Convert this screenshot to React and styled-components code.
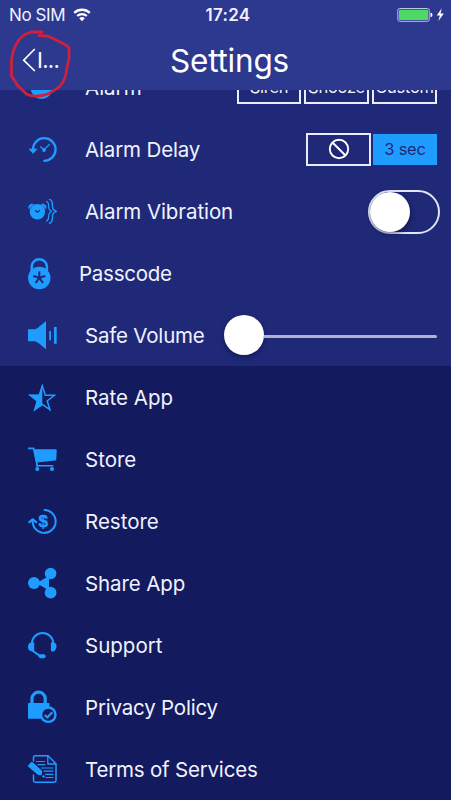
import React from "react";
import styled, { createGlobalStyle } from "styled-components";

const BLUE = "#1f9dff";
const PANEL = "#1f2978";
const DARK = "#141a5e";

const GlobalStyle = createGlobalStyle`
  * { box-sizing: border-box; }
  body { margin: 0; background: ${DARK}; }
`;

const Screen = styled.div`
  position: relative;
  display: flex;
  flex-direction: column;
  width: 451px;
  height: 800px;
  overflow: hidden;
  background: ${DARK};
  color: #f0f2ff;
  font-family: Inter, "Liberation Sans", sans-serif;
`;

const Header = styled.header`
  flex: none;
  height: 90px;
  background: #2d388f;
`;

const StatusBar = styled.div`
  display: grid;
  grid-template-columns: 1fr auto 1fr;
  align-items: center;
  height: 30px;
  padding: 0 6px 0 9px;
  font-size: 17px;
`;

const Carrier = styled.div`
  display: flex;
  align-items: center;
  gap: 8px;
  letter-spacing: -0.4px;
`;

const Clock = styled.div`
  padding-left: 2px;
  font-weight: 600;
  font-size: 17px;
  letter-spacing: 0.3px;
`;

const Power = styled.div`
  display: flex;
  justify-content: flex-end;
`;

const NavBar = styled.div`
  display: grid;
  grid-template-columns: 80px 1fr 72px;
  align-items: center;
  height: 60px;
`;

const BackButton = styled.button`
  display: flex;
  align-items: center;
  gap: 1px;
  height: 60px;
  padding: 0 0 1px 22px;
  border: 0;
  background: none;
  color: #fff;
  font: 400 22px Inter, sans-serif;
  letter-spacing: -0.7px;
`;

const Title = styled.h1`
  margin: 0;
  padding-top: 1px;
  color: #fff;
  font-size: 31.5px;
  font-weight: 400;
  line-height: 60px;
  text-align: center;
  letter-spacing: -0.2px;
`;

const Content = styled.main`
  flex: 1;
  overflow: hidden;
`;

const List = styled.div`
  margin-top: -34px;
`;

const Section = styled.section`
  background: ${(p) => (p.$dark ? DARK : PANEL)};
`;

const Row = styled.div`
  display: flex;
  align-items: center;
  height: 62px;
  padding: 2px 14px 0 24px;
`;

const Icon = styled.svg`
  flex: none;
  width: 36px;
  height: 36px;
  margin-right: ${(p) => (p.$tight ? 19 : 25)}px;
  fill: ${BLUE};
  stroke: none;
  overflow: visible;
`;

const Label = styled.span`
  flex: 1;
  white-space: nowrap;
  font-size: 20.5px;
  line-height: 28px;
  letter-spacing: ${(p) => p.$spacing || 0}px;
`;

const Segments = styled.div`
  display: flex;
  align-items: center;
  gap: ${(p) => p.$gap || 3}px;
  margin-top: -2px;
`;

const Segment = styled.div`
  display: flex;
  align-items: center;
  justify-content: center;
  width: ${(p) => p.$width || 65}px;
  height: ${(p) => (p.$active ? 31 : 33)}px;
  border: ${(p) => (p.$active ? "0" : "2px solid #e9ebff")};
  background: ${(p) => (p.$active ? BLUE : "transparent")};
  color: ${(p) => (p.$active ? PANEL : "#f0f2ff")};
  font-size: 16.5px;
  letter-spacing: -0.25px;
`;

const Toggle = styled.div`
  display: flex;
  align-items: center;
  width: 72px;
  height: 44px;
  margin-right: -3px;
  border: 2px solid #e3e5f3;
  border-radius: 22px;
`;

const ToggleKnob = styled.div`
  width: 40px;
  height: 40px;
  margin-top: -1px;
  border-radius: 50%;
  background: #fff;
  box-shadow: 1px 2px 5px rgba(5, 10, 50, 0.5);
`;

const Slider = styled.div`
  display: flex;
  align-items: center;
  width: 213px;
`;

const Thumb = styled.div`
  flex: none;
  width: 40px;
  height: 40px;
  margin-top: -2px;
  border-radius: 50%;
  background: #fff;
  box-shadow: 0 2px 5px rgba(5, 10, 50, 0.5);
`;

const Track = styled.div`
  flex: 1;
  height: 3px;
  margin-top: 1px;
  border-radius: 0 2px 2px 0;
  background: #afb2cb;
`;

const Scribble = styled.svg`
  position: absolute;
  left: 0;
  top: 0;
  pointer-events: none;
`;

const line = (w) => ({ fill: "none", stroke: BLUE, strokeWidth: w, strokeLinecap: "round", strokeLinejoin: "round" });

const icons = {
  alarm: <circle cx="17.5" cy="18" r="10.8" />,
  delay: (
    <>
      <path d="M9 18a11.3 11.3 0 1 1 11.3 10.8" {...line(2.3)} />
      <path d="M4.4 16.8h9.4l-4.7 5z" />
      <path d="M16.5 14.8 20 17.8l5.3-5.3" {...line(1.2)} />
      <circle cx="20" cy="18" r="1.9" />
    </>
  ),
  vibration: (
    <>
      <circle cx="13.4" cy="17.8" r="7.7" />
      <path d="M4.8 14.3a3.4 3.4 0 0 1 4.4-4.1zM22 14.3a3.4 3.4 0 0 0-4.4-4.1z" {...line(0.8)} fill={BLUE} />
      <path d="m11.2 16.2 2.2 2 2.5-2" fill="none" stroke={PANEL} strokeWidth="1.3" />
      <path d="M22.6 7.4c3 1 1.5 5.5 2.4 7.5.4 1 1.6 1.8 2.4 2.4-.8.6-2 1.6-2.4 2.6-.9 2 .6 6.2-2.4 7.2" {...line(1.2)} />
      <path d="M25.5 5.4c4.3 1 2.4 6.5 3.3 9 .5 1.4 2 2.3 3.6 2.9-1.6.6-3.1 1.500-3.6 2.9-.9 2.500 1 8-3.3 9" {...line(1.4)} />
    </>
  ),
  passcode: (
    <>
      <circle cx="15.3" cy="22" r="11.2" />
      <path d="M7.7 15v-4.5a7.6 7.2 0 0 1 15.2 0V15" {...line(2.5)} />
      <path d="M15.3 21.8v-6.3M15.3 21.8l6-1.9M15.3 21.8l3.7 5.2M15.3 21.8l-3.7 5.2M15.3 21.8l-6-1.9" fill="none" stroke={PANEL} strokeWidth="2.1" />
    </>
  ),
  volume: (
    <path d="M4 11.3h7C14.5 10 18 6 22 3v28.2C18 28 14.5 24.6 11 23.3H4zM25.2 13H27v9.3h-1.800zM30 9h2.700v16.700H30z" />
  ),
  star: (
    <>
      <path d="M18.3 6l3 9.300H30.500l-7.300 5.700 2.700 8.600-7.600-5.200-7.600 5.200 2.700-8.600-7.300-5.700h9.200z" {...line(1.500)} strokeLinejoin="miter" />
      <path d="M18.300 4v21l-8.500 6.200 3.100-10L4.500 14.700H15z" />
    </>
  ),
  cart: (
    <>
      <path d="M4.800 6.300h4.800l3.700 17.500" {...line(1.700)} />
      <path d="M10 7.200h21.700q1 0 1 1l-.4 9q0 1-1 1.200L12.500 20.600z" />
      <path d="M12.500 23.800h16.200" {...line(1.600)} />
      <circle cx="13.300" cy="27" r="2" />
      <circle cx="28" cy="27" r="2" />
    </>
  ),
  restore: (
    <>
      <path d="M8.700 16.500a11.500 11.500 0 1 0 11.800-10.600" {...line(2)} />
      <path d="m5.300 18.200 3.400-2.900 3.500 2.900" {...line(2.200)} />
      <text x="19.300" y="22.700" fontSize="17" fontWeight="600" textAnchor="middle" fontFamily="Liberation Sans" stroke={BLUE} strokeWidth=".5">$</text>
    </>
  ),
  share: (
    <>
      <circle cx="10" cy="17" r="6" />
      <circle cx="26.600" cy="7.500" r="5.800" />
      <circle cx="26.600" cy="26.700" r="5.900" />
      <path d="M14 16.300 24 10.500l1 1v11.500l-1 1L14 18z" />
    </>
  ),
  support: (
    <>
      <path d="M8 16.500v-1.200a10.600 10.200 0 0 1 21.200 0v1.200" {...line(2)} />
      <path d="M7.500 14.500h2.700v8.700H7.500c-4.700 0-4.700-8.700 0-8.700zM29.600 14.500h-2.700v7.300c0 2.300 3 2.300 3.900.8 2.600-2.200 2.400-8.100-1.200-8.100z" />
      <path d="m8.800 23 6.500 4.400" {...line(1.900)} />
      <rect x="14.600" y="26.300" width="7" height="4" rx="2" />
    </>
  ),
  privacy: (
    <>
      <path d="M8 14V8.500a6.600 6.300 0 0 1 13.200 0V14" {...line(3.200)} />
      <rect x="4" y="13" width="21.500" height="15.700" rx=".5" />
      <circle cx="24.300" cy="24.700" r="8.400" />
      <circle cx="24.300" cy="24.700" r="6" fill={DARK} />
      <path d="m20.800 25 2.500 2.500 5-5.200" {...line(2.200)} strokeLinecap="butt" />
    </>
  ),
  terms: (
    <>
      <path d="M9.500 9V5.500q0-1.700 1.700-1.700H24l8 8v16.700q0 1.700-1.700 1.700H11.200q-1.700 0-1.700-1.700V23" {...line(1.500)} />
      <path d="M23.800 4v8h8" {...line(1.300)} />
      <path d="M12.500 9.500h8M14 12.700h7M17.500 16h11.500M20 19.200h9M21.500 22.300H29M22 25.500h7" {...line(1.200)} />
      <path d="M4.300 13.200 7 10.300q.8-.8 1.700 0l9.500 8.700-.6 4.300-3.400-.3-9.900-8.300q-.8-.7 0-1.500z" />
      <circle cx="19.500" cy="24.400" r="1.200" />
    </>
  ),
};

function Item({ icon, label, spacing, tight, children }) {
  return (
    <Row>
      <Icon viewBox="0 0 36 36" $tight={tight}>{icons[icon]}</Icon>
      <Label $spacing={spacing}>{label}</Label>
      {children}
    </Row>
  );
}

const links = [
  ["star", "Rate App", 0],
  ["cart", "Store", 0],
  ["restore", "Restore", 0],
  ["share", "Share App", -0.1],
  ["support", "Support", 0],
  ["privacy", "Privacy Policy", -0.2],
  ["terms", "Terms of Services", -0.2],
];

export default function App() {
  return (
    <Screen>
      <GlobalStyle />
      <Header>
        <StatusBar>
          <Carrier>
            No SIM
            <svg width="18" height="14" viewBox="0 0 18 14" fill="none" stroke="#fff" strokeWidth="2.300">
              <path d="M1.200 4.900a11.200 11.200 0 0 1 15.600 0M4.200 8a7 7 0 0 1 9.600 0" />
              <path d="M9 13.200 6.200 10.300a4 4 0 0 1 5.600 0z" fill="#fff" stroke="none" />
            </svg>
          </Carrier>
          <Clock>17:24</Clock>
          <Power>
            <svg width="48" height="16" viewBox="0 0 48 16">
              <rect x=".8" y="1.500" width="31.400" height="12.800" rx="1.800" fill="none" stroke="#b9c6e6" />
              <rect x="2" y="2.700" width="29" height="10.400" rx=".6" fill="#4cd964" />
              <path d="M33.500 5.500q2 .5 2 2.400t-2 2.400z" fill="#fff" />
              <path d="M44.800 1.300 39.700 8.500h3.100l-1.300 5.500 5.300-7.600h-3.300z" fill="#fff" />
            </svg>
          </Power>
        </StatusBar>
        <NavBar>
          <BackButton>
            <svg width="14" height="24" viewBox="0 0 14 24" fill="none" stroke="#fff" strokeWidth="1.700">
              <path d="M12.800 1 1.700 12.200 12.800 23" />
            </svg>
            I...
          </BackButton>
          <Title>Settings</Title>
        </NavBar>
      </Header>
      <Content>
        <List>
          <Section>
            <Item icon="alarm" label="Alarm">
              <Segments>
                <Segment $width={64}>Siren</Segment>
                <Segment>Snooze</Segment>
                <Segment>Custom</Segment>
              </Segments>
            </Item>
            <Item icon="delay" label="Alarm Delay" spacing={-0.15}>
              <Segments $gap={2}>
                <Segment>
                  <svg width="22" height="22" viewBox="0 0 22 22" fill="none" stroke="#fff" strokeWidth="1.900">
                    <circle cx="11" cy="11" r="9.200" />
                    <path d="m4.500 4.500 13 13" />
                  </svg>
                </Segment>
                <Segment $active $width={64}>3 sec</Segment>
              </Segments>
            </Item>
            <Item icon="vibration" label="Alarm Vibration" spacing={-0.08}>
              <Toggle><ToggleKnob /></Toggle>
            </Item>
            <Item icon="passcode" label="Passcode" spacing={-0.25} tight />
            <Item icon="volume" label="Safe Volume" spacing={-0.2}>
              <Slider><Thumb /><Track /></Slider>
            </Item>
          </Section>
          <Section $dark>
            {links.map(([icon, label, spacing]) => (
              <Item key={icon} icon={icon} label={label} spacing={spacing} />
            ))}
          </Section>
        </List>
      </Content>
      <Scribble width="80" height="110" viewBox="0 0 80 110" fill="none" stroke="#d0203a" strokeWidth="2.800" strokeLinecap="round" strokeLinejoin="round">
        <path d="M42 32H31C24 34 20 37 17 43 13 49 12 54 11.500 61V76L18 86 27 94.500Q33 97 42 95.500C50 94 54 91 59 87 64 82 66 77 66.500 70L69 58V48Q68 46 62 43L52 38Q48 35.500 39 35.500" />
      </Scribble>
    </Screen>
  );
}
